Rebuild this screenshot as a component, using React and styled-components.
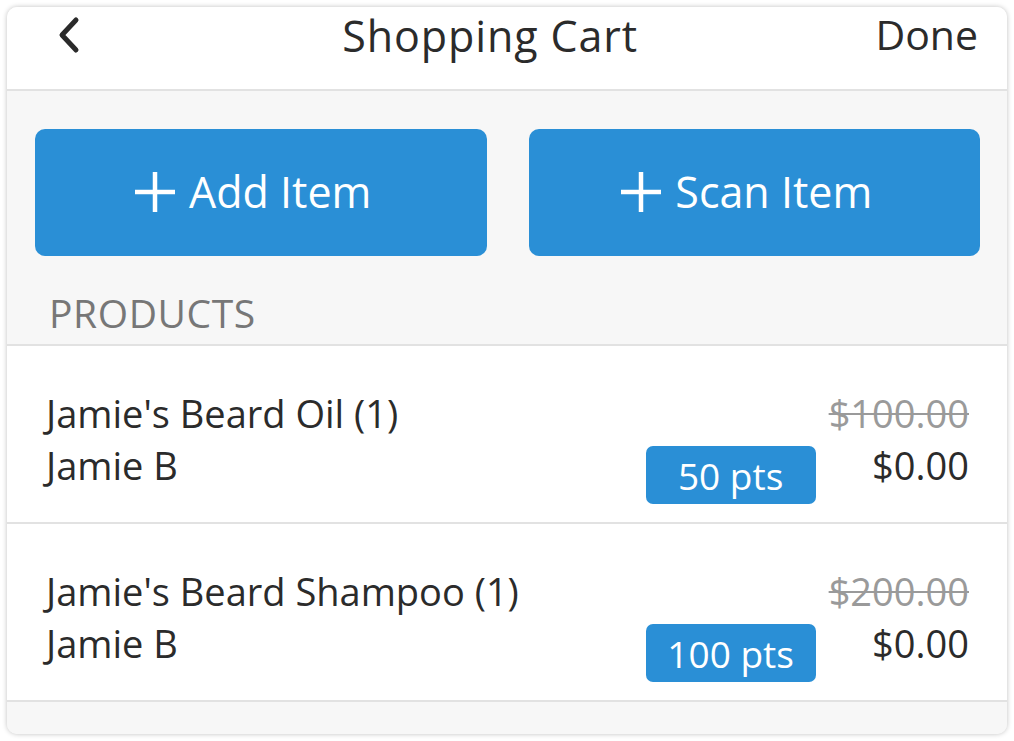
import React from "react";
import styled, { createGlobalStyle } from "styled-components";

const Global = createGlobalStyle`
  html, body { margin: 0; padding: 0; background: #ffffff; }
  body { font-family: "Open Sans", "Liberation Sans", sans-serif; color: #2b2b2b; }
  * { box-sizing: border-box; }
`;

const Page = styled.div`
  padding: 7px;
  width: 1014px;
  height: 741px;
`;

const Card = styled.div`
  width: 1000px;
  height: 727px;
  border-radius: 10px;
  overflow: hidden;
  background: #f7f7f7;
  box-shadow: 0 0 5px rgba(0, 0, 0, 0.25);
  display: flex;
  flex-direction: column;
`;

const Header = styled.header`
  height: 84px;
  flex: none;
  background: #fff;
  border-bottom: 2px solid #e2e2e2;
  display: flex;
  justify-content: space-between;
  align-items: flex-start;
  padding: 0 29px 0 48px;
`;

const Back = styled.button`
  background: none;
  border: 0;
  padding: 0;
  margin-top: 9px;
  width: 40px;
  display: flex;
`;

const Title = styled.h1`
  margin: 0 0 0 10px;
  font-size: 43px;
  font-weight: 400;
  line-height: 58px;
  letter-spacing: 0.9px;
  color: #2b2b2b;
`;

const Done = styled.button`
  background: none;
  border: 0;
  padding: 0;
  margin-top: 2px;
  font-family: inherit;
  font-size: 41px;
  line-height: 50px;
  color: #2b2b2b;
`;

const Actions = styled.div`
  display: grid;
  grid-template-columns: 1fr 1fr;
  gap: 42px;
  padding: 38px 27px 0 28px;
`;

const ActionButton = styled.button`
  height: 127px;
  border: 0;
  border-radius: 10px;
  background: #2a8fd6;
  color: #fff;
  font-family: inherit;
  font-size: 43px;
  display: flex;
  align-items: center;
  justify-content: center;
  gap: 14px;
  padding: 0 15px 2px 0;
`;

const SectionLabel = styled.div`
  padding: 34px 0 0 42px;
  height: 90px;
  font-size: 39px;
  line-height: 45px;
  color: #777;
  letter-spacing: 0.6px;
  border-bottom: 2px solid #e2e2e2;
`;

const Row = styled.div`
  background: #fff;
  height: 178px;
  border-bottom: 2px solid #e2e2e2;
  display: flex;
  justify-content: space-between;
  padding: 41px 38px 0 39px;
`;

const Info = styled.div`
  display: flex;
  flex-direction: column;
`;

const Line = styled.div`
  font-size: 38px;
  line-height: 52px;
  color: #2b2b2b;
`;

const Right = styled.div`
  display: flex;
  gap: 13px;
`;

const Badge = styled.div`
  align-self: flex-start;
  margin-top: 59px;
  width: 170px;
  height: 58px;
  border-radius: 7px;
  background: #2a8fd6;
  color: #fff;
  font-size: 37px;
  display: flex;
  align-items: center;
  justify-content: center;
`;

const Prices = styled.div`
  display: flex;
  flex-direction: column;
  align-items: flex-end;
`;

const OldPrice = styled(Line)`
  color: #9a9a9a;
  text-decoration: line-through;
  text-decoration-thickness: 2px;
`;

const Filler = styled.div`
  flex: 1;
  background: #f7f7f7;
`;

const Chevron = () => (
  <svg width="30" height="40" viewBox="0 0 30 40">
    <path d="M21 4 L7 19 L21 34" fill="none" stroke="#2b2b2b" strokeWidth="5" strokeLinecap="round" strokeLinejoin="round" />
  </svg>
);

const Plus = () => (
  <svg width="40" height="40" viewBox="0 0 40 40">
    <path d="M20 0 V40 M0 20 H40" stroke="#fff" strokeWidth="4.5" />
  </svg>
);

const items = [
  { name: "Jamie's Beard Oil (1)", staff: "Jamie B", pts: "50 pts", old: "$100.00", price: "$0.00" },
  { name: "Jamie's Beard Shampoo (1)", staff: "Jamie B", pts: "100 pts", old: "$200.00", price: "$0.00" },
];

export default function App() {
  return (
    <>
      <Global />
      <Page>
        <Card>
          <Header>
            <Back aria-label="Back"><Chevron /></Back>
            <Title>Shopping Cart</Title>
            <Done>Done</Done>
          </Header>
          <Actions>
            <ActionButton><Plus />Add Item</ActionButton>
            <ActionButton><Plus />Scan Item</ActionButton>
          </Actions>
          <SectionLabel>PRODUCTS</SectionLabel>
          {items.map((it) => (
            <Row key={it.name}>
              <Info>
                <Line>{it.name}</Line>
                <Line>{it.staff}</Line>
              </Info>
              <Right>
                <Badge>{it.pts}</Badge>
                <Prices>
                  <OldPrice>{it.old}</OldPrice>
                  <Line>{it.price}</Line>
                </Prices>
              </Right>
            </Row>
          ))}
          <Filler />
        </Card>
      </Page>
    </>
  );
}
